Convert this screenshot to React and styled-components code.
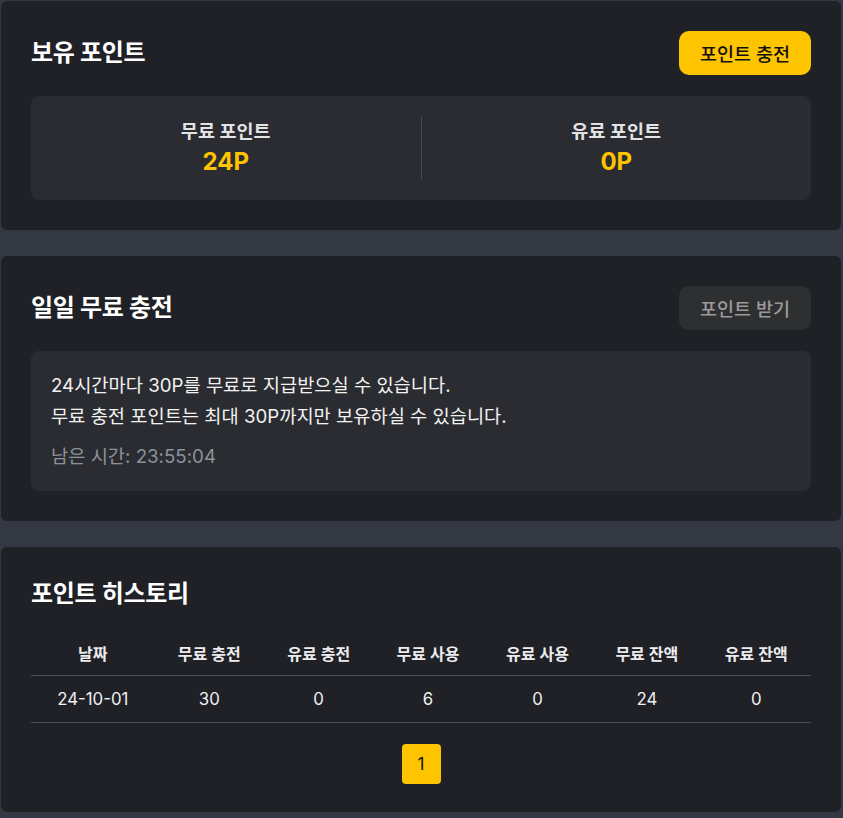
import React from "react";
import styled, { createGlobalStyle } from "styled-components";

const Global = createGlobalStyle`
  html, body { margin: 0; padding: 0; background: #343842; }
  body { font-family: "Inter", "Noto Sans CJK KR", sans-serif; color: #fff; }
  * { box-sizing: border-box; }
`;

const Page = styled.div`
  display: flex;
  flex-direction: column;
  gap: 26px;
  padding: 1px 2px 7px 1px;
`;

const Card = styled.section`
  background: #1f2126;
  border-radius: 6px;
  padding: 30px 30px ${(p) => p.$pb || 30}px;
`;

const Header = styled.div`
  display: flex;
  align-items: center;
  justify-content: space-between;
  min-height: ${(p) => (p.$auto ? "0" : "44px")};
  margin-bottom: ${(p) => p.$mb || 21}px;
`;

const Title = styled.h2`
  margin: 0;
  font-size: 24px;
  line-height: 34px;
  font-weight: 700;
  color: #ffffff;
  letter-spacing: -0.3px;
`;

const Button = styled.button`
  height: 44px;
  padding: 0 21px;
  border: none;
  border-radius: 10px;
  font-family: inherit;
  font-size: 18.5px;
  font-weight: 500;
  background: ${(p) => (p.$primary ? "#ffc400" : "#2e2f31")};
  color: ${(p) => (p.$primary ? "#111" : "#9b9b9b")};
  cursor: pointer;
`;

const Balance = styled.div`
  display: flex;
  background: #2a2c31;
  border-radius: 8px;
  padding: 20px 0;
`;

const BalanceItem = styled.div`
  flex: 1;
  display: flex;
  flex-direction: column;
  align-items: center;
  justify-content: center;
  gap: 4px;
  height: 64px;
  & + & {
    border-left: 1px solid #474a52;
  }
`;

const BalanceLabel = styled.div`
  font-size: 18.5px;
  line-height: 24px;
  font-weight: 600;
  color: #e3e3e6;
`;

const BalanceValue = styled.div`
  font-size: 24px;
  line-height: 30px;
  font-weight: 700;
  color: #ffc400;
`;

const InfoBox = styled.div`
  background: #2a2c31;
  border-radius: 8px;
  padding: 19px 20px 19px;
`;

const InfoLine = styled.p`
  margin: 0;
  font-size: 18.7px;
  line-height: 31px;
  color: ${(p) => (p.$muted ? "#8d9299" : "#f2f2f2")};
  margin-top: ${(p) => (p.$muted ? 9 : 0)}px;
`;

const Table = styled.table`
  width: 100%;
  border-collapse: collapse;
`;

const Th = styled.th`
  height: 42px;
  font-size: 16px;
  font-weight: 600;
  color: #ececee;
  text-align: center;
  border-bottom: 1px solid #4a4e58;
  padding: 0 0 2px;
`;

const Td = styled.td`
  height: 47px;
  font-size: 16.8px;
  color: #f0f0f0;
  text-align: center;
  border-bottom: 1px solid #4a4e58;
  padding: 0;
`;

const Pager = styled.div`
  display: flex;
  justify-content: center;
  margin-top: 21px;
`;

const PageBtn = styled.button`
  width: 39px;
  height: 40px;
  border: none;
  border-radius: 4px;
  background: #ffc400;
  color: #111;
  font-family: inherit;
  font-size: 17px;
`;

const cols = ["날짜", "무료 충전", "유료 충전", "무료 사용", "유료 사용", "무료 잔액", "유료 잔액"];
const rows = [["24-10-01", "30", "0", "6", "0", "24", "0"]];

export default function App() {
  return (
    <>
      <Global />
      <Page>
        <Card>
          <Header>
            <Title>보유 포인트</Title>
            <Button $primary>포인트 충전</Button>
          </Header>
          <Balance>
            <BalanceItem>
              <BalanceLabel>무료 포인트</BalanceLabel>
              <BalanceValue>24P</BalanceValue>
            </BalanceItem>
            <BalanceItem>
              <BalanceLabel>유료 포인트</BalanceLabel>
              <BalanceValue>0P</BalanceValue>
            </BalanceItem>
          </Balance>
        </Card>
        <Card>
          <Header>
            <Title>일일 무료 충전</Title>
            <Button>포인트 받기</Button>
          </Header>
          <InfoBox>
            <InfoLine>24시간마다 30P를 무료로 지급받으실 수 있습니다.</InfoLine>
            <InfoLine>무료 충전 포인트는 최대 30P까지만 보유하실 수 있습니다.</InfoLine>
            <InfoLine $muted>남은 시간: 23:55:04</InfoLine>
          </InfoBox>
        </Card>
        <Card $pb={28}>
          <Header $auto $mb={22}>
            <Title>포인트 히스토리</Title>
          </Header>
          <Table>
            <thead>
              <tr>
                {cols.map((c) => (
                  <Th key={c}>{c}</Th>
                ))}
              </tr>
            </thead>
            <tbody>
              {rows.map((r, i) => (
                <tr key={i}>
                  {r.map((v, j) => (
                    <Td key={j}>{v}</Td>
                  ))}
                </tr>
              ))}
            </tbody>
          </Table>
          <Pager>
            <PageBtn>1</PageBtn>
          </Pager>
        </Card>
      </Page>
    </>
  );
}
